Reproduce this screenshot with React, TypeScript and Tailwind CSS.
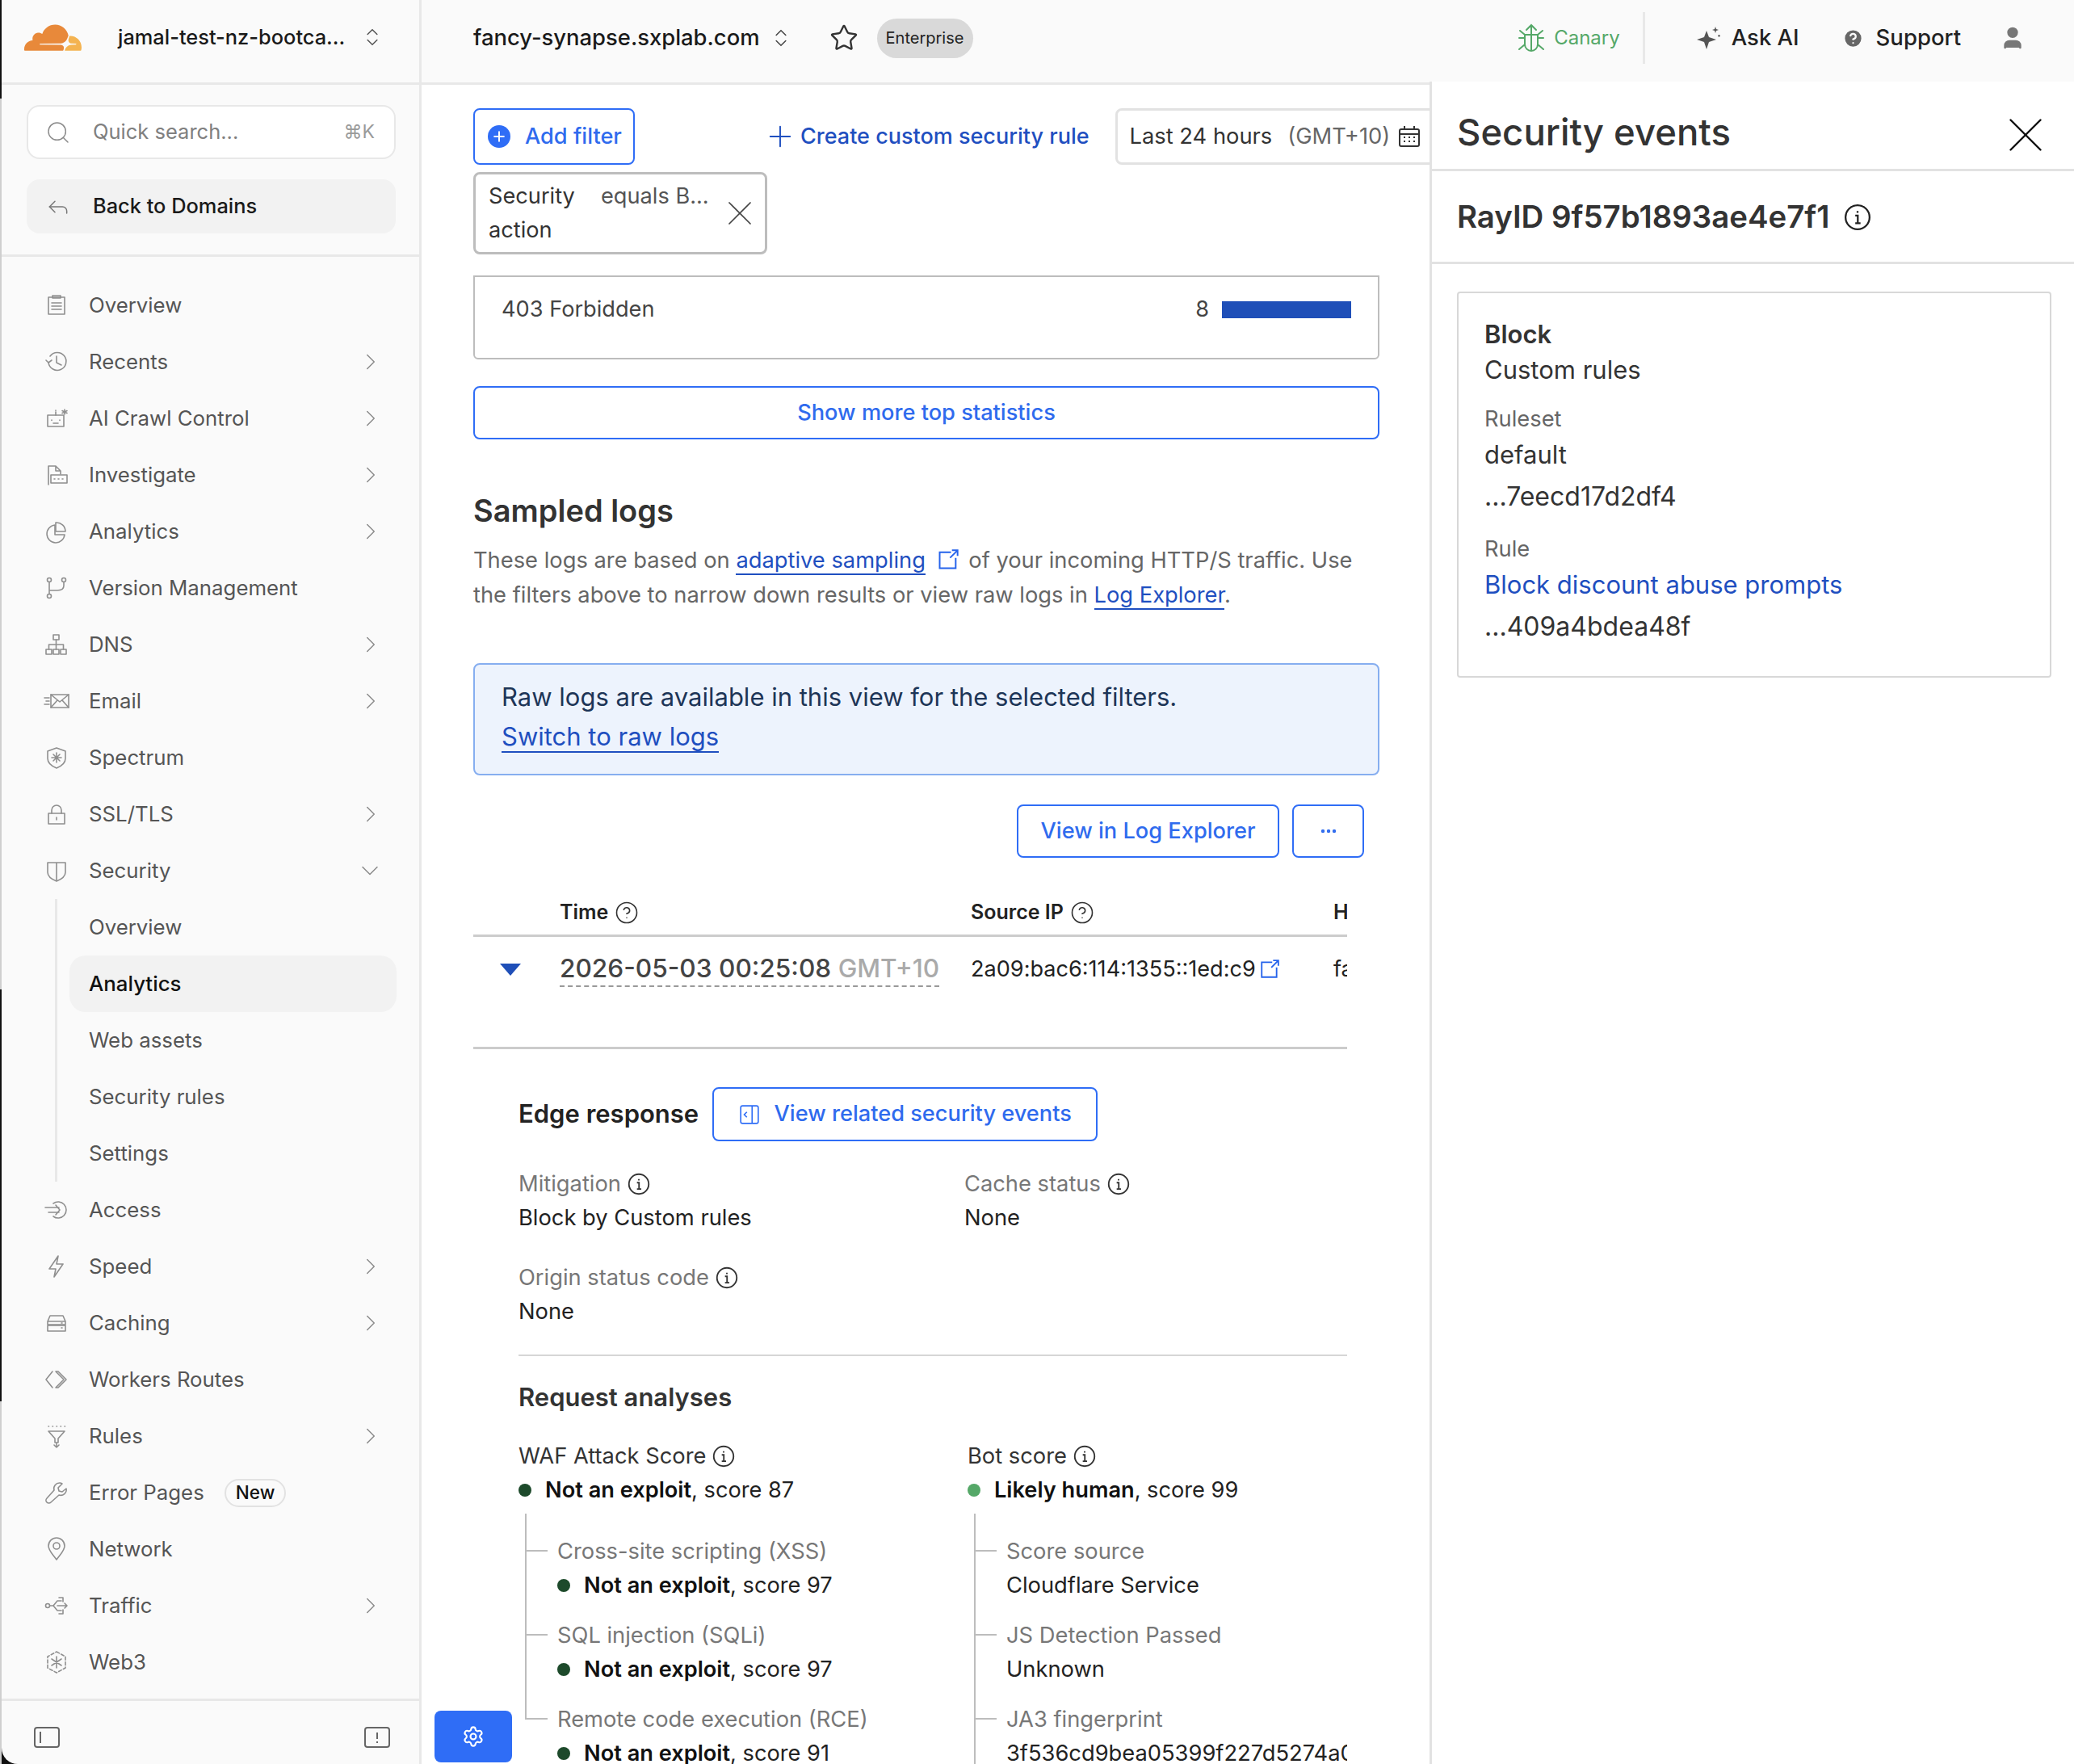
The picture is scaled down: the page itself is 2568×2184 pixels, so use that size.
import { ReactNode } from 'react';
import { ChevronRight, ChevronDown, ChevronsUpDown, CircleHelp, MoreHorizontal, Plus, Reply, Search, Settings, Star, User, X } from 'lucide-react';

// thin outline icons used in the sidebar, all drawn on a 32 box
const Ico = ({ children }: { children: ReactNode }) => (
  <svg viewBox="0 0 32 32" fill="none" stroke="#8f8f8f" strokeWidth="1.6" strokeLinecap="round" strokeLinejoin="round" className="w-8 h-8 shrink-0">
    {children}
  </svg>
);

const icons: Record<string, ReactNode> = {
  overview: <><rect x="6" y="6" width="20" height="21" /><path d="M11 4h10v3H11zM10 13h12M10 17h12M10 21h12" /></>,
  recents: <><path d="M6 17a11 11 0 1 0 2-8" /><path d="M3 14l3 3 4-3M16 9v8l6 3" /></>,
  ai: <><rect x="5" y="12" width="20" height="14" /><path d="M15 12V8M15 6v.5M10 18v.5M20 18v.5M12 22h6M26 5v6M23 6.5l6 3M29 6.5l-6 3" /></>,
  investigate: <><path d="M6 28V5h9l6 6v4M15 5v6h6" /><rect x="9" y="16" width="20" height="10" /><path d="M13 21h1M18 21h1M23 21h1" /></>,
  analytics: <><path d="M14 8a11 11 0 1 0 12 12H14z" /><path d="M15 5a11 11 0 0 1 12 11H15z" /></>,
  version: <><circle cx="7" cy="6" r="2.5" /><circle cx="25" cy="6" r="2.5" /><circle cx="7" cy="26" r="2.5" /><path d="M7 8.5v15M7 19h10q8 0 8-6v-4.5" /></>,
  dns: <><rect x="12" y="4" width="7" height="6" /><rect x="3" y="22" width="7" height="6" /><rect x="12" y="22" width="7" height="6" /><rect x="21" y="22" width="7" height="6" /><path d="M15.5 10v12M6.5 22v-6h18v6" /></>,
  email: <><rect x="9" y="8" width="22" height="16" /><path d="M9 8l11 9 11-9M9 24l8-9M31 24l-8-9M1 12h6M3 16h4M1 20h6" /></>,
  spectrum: <><path d="M16 4l11 4v9c0 6-6 10-11 12-5-2-11-6-11-12V8z" /><path d="M16 10v12M10 16h12M12 12l8 8M20 12l-8 8" /></>,
  lock: <><rect x="6" y="15" width="20" height="13" /><path d="M10 15v-4a6 6 0 0 1 12 0v4M16 20v3" /></>,
  shield: <><path d="M5 6h22v12c0 5-6 9-11 11-5-2-11-6-11-11zM16 6v23" /></>,
  access: <><path d="M12 8a10 10 0 1 1 0 16M2 13h17M6 19h13M15 10l5 6-5 6" /></>,
  speed: <path d="M18 3L7 19h8l-2 10 11-16h-8z" />,
  caching: <><path d="M5 14l3-7h16l3 7v4H5zM5 14h22M5 19h22v7H5zM22 16h1M22 22h1" /></>,
  workers: <path d="M11 6L3 16l8 10M15 6h3l10 10-10 10h-3l10-10z" />,
  rules: <><path d="M6 10h20l-8 9v5h-4v-5zM16 24v6M13 27l3 3 3-3M6 4h.5M11 4h.5M16 4h.5M21 4h.5M26 4h.5" /></>,
  error: <path d="M20 4a7 7 0 0 0-7 9L4 23a3 3 0 0 0 5 5l10-9a7 7 0 0 0 9-8l-5 4-4-1-1-4 5-5a7 7 0 0 0-3-1z" />,
  network: <><path d="M16 29c-4-6-10-11-10-17a10 10 0 0 1 20 0c0 6-6 11-10 17z" /><circle cx="16" cy="12" r="4" /></>,
  traffic: <><circle cx="5" cy="16" r="2.5" /><path d="M8 16h4l5-6h5M12 16l5 6h5M17 16h12M19 6h5v5M26 13l3 3-3 3M19 26h5v-5" /></>,
  web3: <><path d="M16 3l11 6v14l-11 6-11-6V9z" strokeDasharray="4 2.4" /><path d="M16 9v14M10 12l12 8M22 12l-12 8" /></>,
};

type Item = { label: string; icon: string; chevron?: boolean; badge?: string };

const topItems: Item[] = [
  { label: 'Overview', icon: 'overview' },
  { label: 'Recents', icon: 'recents', chevron: true },
  { label: 'AI Crawl Control', icon: 'ai', chevron: true },
  { label: 'Investigate', icon: 'investigate', chevron: true },
  { label: 'Analytics', icon: 'analytics', chevron: true },
  { label: 'Version Management', icon: 'version' },
  { label: 'DNS', icon: 'dns', chevron: true },
  { label: 'Email', icon: 'email', chevron: true },
  { label: 'Spectrum', icon: 'spectrum' },
  { label: 'SSL/TLS', icon: 'lock', chevron: true },
];

const bottomItems: Item[] = [
  { label: 'Access', icon: 'access' },
  { label: 'Speed', icon: 'speed', chevron: true },
  { label: 'Caching', icon: 'caching', chevron: true },
  { label: 'Workers Routes', icon: 'workers' },
  { label: 'Rules', icon: 'rules', chevron: true },
  { label: 'Error Pages', icon: 'error', badge: 'New' },
  { label: 'Network', icon: 'network' },
  { label: 'Traffic', icon: 'traffic', chevron: true },
  { label: 'Web3', icon: 'web3' },
];

const subItems = ['Overview', 'Analytics', 'Web assets', 'Security rules', 'Settings'];

const Icon = ({ name }: { name: string }) => <Ico>{icons[name]}</Ico>;

function NavRow({ item }: { item: Item }) {
  return (
    <div className="h-[70px] flex items-center pl-[52px] pr-[43px] text-[25.8px] text-[#555555]">
      <Icon name={item.icon} />
      <span className="ml-6">{item.label}</span>
      {item.badge && (
        <span className="ml-[25px] h-[35px] px-[12px] flex items-center rounded-full border-2 border-[#e2e2e2] text-[22.5px] font-medium text-[#111111]">{item.badge}</span>
      )}
      {item.chevron && <ChevronRight size={34} strokeWidth={1.05} color="#8a8a8a" className="ml-auto" />}
    </div>
  );
}

function Sidebar() {
  return (
    <aside className="w-[520px] h-[2184px] shrink-0 flex flex-col bg-[#fafafa] border-r-[3px] border-[#e8e8e8] rounded-bl-[20px]">
      <div className="h-[105px] shrink-0 flex items-center pl-[28px] pb-[10px] border-b-[3px] border-[#e8e8e8]">
        <svg viewBox="0 6.4 24 11.1" className="w-[71px] h-[33px]">
          <path fill="#e8893a" d="M16.5088 16.8447c.1475-.5068.0908-.9707-.1553-1.3154-.2246-.3164-.6045-.499-1.0615-.5205l-8.6592-.1123a.1559.1559 0 0 1-.1333-.0713c-.0283-.042-.0351-.0986-.021-.1553.0278-.084.1123-.1484.2036-.1562l8.7359-.1123c1.0351-.0489 2.1601-.8868 2.5537-1.9136l.499-1.3013c.0215-.0561.0293-.1128.0147-.168-.5625-2.5463-2.835-4.4453-5.5499-4.4453-2.5039 0-4.6284 1.6177-5.3876 3.8614-.4927-.3658-1.1187-.5625-1.794-.499-1.2026.119-2.1665 1.083-2.2861 2.2856-.0283.31-.0069.6128.0635.894C1.5683 13.171 0 14.7754 0 16.752c0 .1748.0142.3515.0352.5273.0141.083.0844.1475.1689.1475h15.9814c.0909 0 .1758-.0645.2032-.1553l.12-.4268z" />
          <path fill="#f4b350" d="M19.2656 11.2813c-.0771 0-.1611 0-.2383.0112-.0566 0-.1054.0415-.127.0976l-.3378 1.1744c-.1475.5068-.0918.9707.1543 1.3164.2256.3164.6055.498 1.0625.5195l1.8437.1133c.0557 0 .1055.0263.1329.0703.0283.043.0351.1074.0214.1562-.0283.084-.1132.1485-.204.1553l-1.921.1123c-1.041.0488-2.1582.8867-2.5527 1.914l-.1406.3585c-.0283.0713.0215.1416.0986.1416h6.5977c.0771 0 .1474-.0489.169-.126.1122-.4082.1757-.837.1757-1.2803 0-2.6025-2.125-4.727-4.7344-4.727" />
        </svg>
        <span className="ml-[45px] text-[25.4px] font-medium text-[#1a1a1a] whitespace-nowrap">jamal-test-nz-bootca...</span>
        <ChevronsUpDown size={28} strokeWidth={1.3} color="#555555" className="ml-[20px]" />
      </div>

      <div className="pl-[31px] pr-[29px] pt-[25px] h-[213px] shrink-0 border-b-[3px] border-[#e8e8e8]">
        <div className="h-[67px] flex items-center rounded-[16px] border-2 border-[#e8e8e8] bg-white pl-[21px] pr-[24px]">
          <Search size={32} strokeWidth={1.1} color="#8a8a8a" />
          <span className="ml-[27px] text-[25.5px] text-[#808080]">Quick search...</span>
          <span className="ml-auto text-[23px] text-[#9a9a9a]">⌘K</span>
        </div>
        <div className="mt-[25px] h-[67px] flex items-center rounded-[16px] bg-[#f2f2f2] pl-[23px]">
          <Reply size={32} strokeWidth={1.1} color="#777777" />
          <span className="ml-[27px] text-[25.4px] font-medium text-[#1a1a1a]">Back to Domains</span>
        </div>
      </div>

      <nav className="pt-[25px]">
        {topItems.map((item) => (
          <NavRow key={item.label} item={item} />
        ))}
        <div className="h-[70px] flex items-center pl-[52px] pr-[43px] text-[25.8px] text-[#555555]">
          <Icon name="shield" />
          <span className="ml-6">Security</span>
          <ChevronDown size={36} strokeWidth={1} color="#8a8a8a" className="ml-auto" />
        </div>
        <div className="ml-[66px] border-l-[3px] border-[#e8e8e8] pl-[15px] mr-[28px]">
          {subItems.map((s) => (
            <div key={s} className={s === 'Analytics' ? 'h-[70px] flex items-center pl-[24px] text-[25.8px] font-medium text-[#111111] bg-[#f2f2f2] rounded-[20px]' : 'h-[70px] flex items-center pl-[24px] text-[25.8px] text-[#555555]'}>
              {s}
            </div>
          ))}
        </div>
        {bottomItems.map((item) => (
          <NavRow key={item.label} item={item} />
        ))}
      </nav>

      <div className="mt-auto h-[81px] shrink-0 flex items-center justify-between border-t-[3px] border-[#e8e8e8] pl-[40px] pr-[36px] pt-[12px]">
        <svg viewBox="0 0 32 26" className="w-[32px] h-[26px]" fill="none" stroke="#666666" strokeWidth="2"><rect x="1" y="1" width="30" height="24" rx="3" /><path d="M8 6v14" /></svg>
        <svg viewBox="0 0 32 26" className="w-[32px] h-[26px]" fill="none" stroke="#666666" strokeWidth="2"><rect x="1" y="1" width="30" height="24" rx="3" /><path d="M16 7v8M16 18v2" /></svg>
      </div>
    </aside>
  );
}

function TopBar() {
  return (
    <header className="h-[105px] shrink-0 flex items-start bg-[#fafafa] border-b-[3px] border-[#e8e8e8]">
      <div className="h-[94px] flex items-center pl-[64px]">
        <span className="text-[27.4px] font-medium text-[#1a1a1a] whitespace-nowrap">fancy-synapse.sxplab.com</span>
        <ChevronsUpDown size={28} strokeWidth={1.3} color="#444444" className="ml-[12px]" />
        <Star size={36} strokeWidth={1.6} color="#333333" className="ml-[46px]" />
        <span className="ml-[23px] h-[49px] w-[119px] flex items-center justify-center rounded-full bg-[#d9d9d9] text-[20px] text-[#222222]">Enterprise</span>
      </div>
      <div className="ml-auto h-[94px] flex items-center pr-[60px]">
        <svg viewBox="0 0 36 36" className="w-[36px] h-[36px]" fill="none" stroke="#55a868" strokeWidth="2" strokeLinecap="round">
          <path d="M18 2v32M12 8l6-6 6 6M10 14h16v12a8 8 0 0 1-16 0zM10 18H3M26 18h7M10 26l-7 6M26 26l7 6M10 14L4 9M26 14l6-5" />
        </svg>
        <span className="ml-[10px] text-[24px] text-[#55a868]">Canary</span>
        <div className="ml-[28px] w-[3px] h-[64px] bg-[#e8e8e8]" />
        <svg viewBox="0 0 30 30" className="ml-[63px] w-[30px] h-[30px]" fill="#555555">
          <path d="M13 6l3 8 9 3-9 3-3 9-3-9-9-3 9-3zM24 1l1 3 3 1-3 1-1 3-1-3-3-1 3-1zM28.5 11a1.3 1.3 0 1 0 .01 0z" />
        </svg>
        <span className="ml-[14px] text-[27.5px] font-medium text-[#222222]">Ask AI</span>
        <CircleHelp size={27} color="#fafafa" fill="#666666" strokeWidth={2} className="ml-[53px]" />
        <span className="ml-[15px] text-[27.5px] font-medium text-[#222222]">Support</span>
        <User size={32} color="#777777" fill="#777777" className="ml-[48px]" />
      </div>
    </header>
  );
}

const OutlineButton = ({ children, className }: { children: ReactNode; className: string }) => (
  <div className={`flex items-center justify-center rounded-[8px] border-2 border-[#2f6df6] text-[#2f6bee] text-[27.2px] font-medium ${className}`}>{children}</div>
);

const ExtLink = ({ size = 28 }: { size?: number }) => (
  <svg viewBox="0 0 24 24" width={size} height={size} fill="none" stroke="#2563eb" strokeWidth="1.7">
    <path d="M15 4H3v17h17V10M14 10l8-8M16 2h6v6" />
  </svg>
);

const Help = () => <CircleHelp size={30} strokeWidth={1.3} color="#333333" className="ml-[8px]" />;

// circled i with a small serif foot
const InfoI = ({ size = 28, color = '#333333', className = 'ml-[8px]' }: { size?: number; color?: string; className?: string }) => (
  <svg viewBox="0 0 24 24" width={size} height={size} fill="none" stroke={color} strokeWidth="1.6" className={className}>
    <circle cx="12" cy="12" r="10.5" />
    <path d="M10 10.5h2.2V17M10 17.2h4.6M12 6.6v1.6" />
  </svg>
);

const Score = ({ bold, score, dot = '#1d4a2b' }: { bold: string; score: string; dot?: string }) => (
  <div className="h-[42px] flex items-center text-[27.2px] text-[#222222]">
    <span className="w-4 h-4 rounded-full shrink-0" style={{ background: dot }} />
    <span className="ml-[17px] font-semibold text-[#111111]">{bold}</span>
    <span>, score {score}</span>
  </div>
);

function TreeItem({ label, last, children }: { label: string; last?: boolean; children: ReactNode }) {
  return (
    <div className="relative pl-[40px] pt-[26px] mb-[-6px]">
      <span className={last ? 'absolute left-0 top-0 h-[46px] w-[2px] bg-[#bdbdbd]' : 'absolute left-0 top-0 bottom-0 w-[2px] bg-[#bdbdbd]'} />
      <span className="absolute left-0 top-[45px] h-[2px] w-[28px] bg-[#bdbdbd]" />
      <div className="h-[42px] flex items-center text-[27.3px] text-[#777777]">{label}</div>
      {children}
    </div>
  );
}

function Main() {
  return (
    <main className="w-[1248px] shrink-0 overflow-hidden pl-[64px] bg-white">
      {/* filter bar */}
      <div className="mt-[29px] flex items-center h-[70px] w-[1300px]">
        <OutlineButton className="w-[200px] h-[70px] !justify-start pl-[16px] gap-[18px]">
          <span className="w-[28px] h-[28px] rounded-full bg-[#2f6df6] flex items-center justify-center">
            <Plus size={20} strokeWidth={2.4} color="#ffffff" />
          </span>
          Add filter
        </OutlineButton>
        <Plus size={42} strokeWidth={1.1} color="#2050c0" className="ml-[159px]" />
        <span className="ml-[4px] text-[27px] font-medium text-[#1f4fc0] whitespace-nowrap">Create custom security rule</span>
        <div className="ml-[32px] w-[420px] h-[70px] shrink-0 flex items-center rounded-[8px] border-[3px] border-[#e2e2e2] pl-[15px] text-[27.3px]">
          <span className="text-[#333333]">Last 24 hours</span>
          <span className="ml-[19px] text-[#666666]">(GMT+10)</span>
          <svg viewBox="0 0 26 26" className="ml-[11px] w-[26px] h-[26px]" fill="none" stroke="#333333" strokeWidth="2">
            <rect x="1" y="4" width="24" height="21" rx="2" />
            <path d="M1 10h24M7 0v5M19 0v5M6 14h2M12 14h2M18 14h2M6 19h2M12 19h2M18 19h2" />
          </svg>
        </div>
      </div>

      <div className="mt-[9px] w-[364px] h-[102px] flex items-center rounded-[8px] border-[3px] border-[#bdbdbd] pl-[16px] text-[27.2px] leading-[42px] text-[#333333]">
        <div className="w-[285px] shrink-0">
          <div className="flex">
            <span className="w-[139px]">Security</span>
            <span className="text-[#555555]">equals B...</span>
          </div>
          <div>action</div>
        </div>
        <X size={52} strokeWidth={0.8} color="#444444" />
      </div>

      <div className="mt-[26px] w-[1122px] h-[104px] flex items-start pt-[20px] pl-[33px] pr-[33px] rounded-b-[6px] border-2 border-[#bdbdbd] text-[27.2px] text-[#444444]">
        <span className="leading-[40px]">403 Forbidden</span>
        <span className="ml-auto leading-[40px]">8</span>
        <span className="ml-[16px] mt-[10px] w-[160px] h-[21px] bg-[#1f4fb8]" />
      </div>

      <OutlineButton className="mt-[33px] w-[1122px] h-[66px]">Show more top statistics</OutlineButton>

      <h2 className="mt-[64px] h-[48px] flex items-center text-[38px] font-semibold text-[#333333]">Sampled logs</h2>
      <p className="mt-[16px] w-[1122px] text-[27.3px] leading-[43px] text-[#666666]">
        These logs are based on <span className="text-[#1f4fc0] border-b-2 border-[#1f4fc0]">adaptive sampling</span>{' '}
        <span className="inline-block align-[-4px] ml-[6px] mr-[4px]"><ExtLink /></span> of your incoming HTTP/S traffic. Use
        <br />
        the filters above to narrow down results or view raw logs in <span className="text-[#1f4fc0] border-b-2 border-[#1f4fc0]">Log Explorer</span>.
      </p>

      <div className="mt-[63px] w-[1122px] h-[139px] flex flex-col justify-center rounded-[8px] border-2 border-[#86aef0] bg-[#edf3fd] pl-[33px] pb-[7px] text-[31px] leading-[49px] text-[#1d3557]">
        <div>Raw logs are available in this view for the selected filters.</div>
        <div><span className="text-[#1f4fc0] border-b-2 border-[#1f4fc0]">Switch to raw logs</span></div>
      </div>

      <div className="mt-[36px] w-[1103px] flex justify-end gap-[16px]">
        <OutlineButton className="w-[325px] h-[66px]">View in Log Explorer</OutlineButton>
        <OutlineButton className="w-[89px] h-[66px]"><MoreHorizontal size={24} strokeWidth={2.4} /></OutlineButton>
      </div>

      {/* sampled log table */}
      <div className="w-[1082px] overflow-hidden">
        <div className="mt-[41px] h-[57px] flex items-center border-b-[3px] border-[#cccccc] text-[25px] font-semibold text-[#222222] whitespace-nowrap">
          <div className="w-[107px] shrink-0" />
          <div className="w-[509px] shrink-0 flex items-center">Time<Help /></div>
          <div className="w-[449px] shrink-0 flex items-center">Source IP<Help /></div>
          <div>Host</div>
        </div>
        <div className="h-[139px] border-b-[3px] border-[#cccccc]">
          <div className="h-[80px] flex items-center text-[27.1px] text-[#222222] whitespace-nowrap">
            <div className="w-[107px] shrink-0 pl-[33px]">
              <span className="block w-0 h-0 border-l-[13px] border-r-[13px] border-t-[15px] border-l-transparent border-r-transparent border-t-[#1f4fb8]" />
            </div>
            <div className="w-[509px] shrink-0">
              <span className="text-[31.6px] font-medium leading-[42px] text-[#444444] border-b-2 border-dashed border-[#999999] inline-block">
                2026-05-03 00:25:08 <span className="text-[#aaaaaa]">GMT+10</span>
              </span>
            </div>
            <div className="w-[449px] shrink-0 flex items-center">2a09:bac6:114:1355::1ed:c9<span className="ml-[4px]"><ExtLink size={26} /></span></div>
            <div>fancy</div>
          </div>
        </div>

        <div className="pl-[56px]">
          <div className="mt-[47px] h-[67px] flex items-center">
            <span className="text-[31px] font-semibold text-[#222222]">Edge response</span>
            <OutlineButton className="ml-[17px] w-[477px] h-[67px]">
              <svg viewBox="0 0 24 24" className="w-[26px] h-[26px] mr-[18px]" fill="none" stroke="#2f6df6" strokeWidth="1.5"><rect x="2" y="2" width="20" height="20" rx="2" /><path d="M15 2v20M9 9l-3 3 3 3" /></svg>
              View related security events
            </OutlineButton>
          </div>

          <div className="mt-[32px] grid grid-cols-[552px_1fr] text-[27.3px] leading-[42px] text-[#222222]">
            <div>
              <div className="flex items-center text-[#777777]">Mitigation<InfoI /></div>
              <div>Block by Custom rules</div>
            </div>
            <div>
              <div className="flex items-center text-[#777777]">Cache status<InfoI /></div>
              <div>None</div>
            </div>
          </div>
          <div className="mt-[32px] text-[27.3px] leading-[42px] text-[#222222]">
            <div className="flex items-center text-[#777777]">Origin status code<InfoI /></div>
            <div>None</div>
          </div>

          <div className="mt-[32px] h-[2px] bg-[#d6d6d6]" />

          <h3 className="mt-[30px] h-[42px] flex items-center text-[31px] font-semibold text-[#333333]">Request analyses</h3>

          <div className="mt-[31px] grid grid-cols-[556px_1fr] whitespace-nowrap">
            <div>
              <div className="h-[42px] flex items-center text-[27.3px] text-[#333333]">WAF Attack Score<InfoI /></div>
              <Score bold="Not an exploit" score="87" />
              <div className="mt-[8px] ml-[8px]">
                <TreeItem label="Cross-site scripting (XSS)"><Score bold="Not an exploit" score="97" /></TreeItem>
                <TreeItem label="SQL injection (SQLi)"><Score bold="Not an exploit" score="97" /></TreeItem>
                <TreeItem label="Remote code execution (RCE)" last><Score bold="Not an exploit" score="91" /></TreeItem>
              </div>
            </div>
            <div>
              <div className="h-[42px] flex items-center text-[27.3px] text-[#333333]">Bot score<InfoI /></div>
              <Score bold="Likely human" score="99" dot="#55a868" />
              <div className="mt-[8px] ml-[8px]">
                <TreeItem label="Score source"><div className="h-[42px] flex items-center text-[27.3px] text-[#222222]">Cloudflare Service</div></TreeItem>
                <TreeItem label="JS Detection Passed"><div className="h-[42px] flex items-center text-[27.3px] text-[#222222]">Unknown</div></TreeItem>
                <TreeItem label="JA3 fingerprint"><div className="h-[42px] flex items-center text-[27.3px] text-[#222222]">3f536cd9bea05399f227d5274a0e1b6c</div></TreeItem>
              </div>
            </div>
          </div>
        </div>
      </div>
    </main>
  );
}

function Panel() {
  return (
    <section className="flex-1 -mt-[4px] relative z-10 bg-white border-l-[3px] border-[#e2e2e2]">
      <div className="h-[111px] flex items-center justify-between pt-[18px] pl-[31px] pr-[23px] border-b-[3px] border-[#e2e2e2]">
        <h2 className="text-[45.5px] font-medium text-[#333333]">Security events</h2>
        <X size={74} strokeWidth={0.8} color="#111111" className="mt-[6px]" />
      </div>
      <div className="h-[115px] flex items-center pl-[31px] pt-[2px] border-b-[3px] border-[#e2e2e2]">
        <span className="text-[38.4px] font-semibold text-[#333333]">RayID 9f57b1893ae4e7f1</span>
        <InfoI size={34} color="#222222" className="ml-[18px]" />
      </div>
      <div className="mt-[34px] ml-[31px] mr-[28px] h-[478px] rounded-[4px] border-2 border-[#d8d8d8] pl-[32px] pt-[29px] text-[31px] leading-[44px] text-[#333333]">
        <div className="font-semibold">Block</div>
        <div>Custom rules</div>
        <div className="mt-[17px] text-[27.3px] text-[#666666]">Ruleset</div>
        <div>default</div>
        <div className="mt-[8px] text-[32px]">...7eecd17d2df4</div>
        <div className="mt-[21px] text-[27.3px] text-[#666666]">Rule</div>
        <div className="text-[#1f4fc0]">Block discount abuse prompts</div>
        <div className="mt-[8px] text-[32px]">...409a4bdea48f</div>
      </div>
    </section>
  );
}

export default function App() {
  return (
    <div className="relative w-[2568px] h-[2184px] flex overflow-hidden bg-[#111111] font-['Inter',sans-serif]">
      <div className="w-[2px] shrink-0 flex flex-col">
        <div className="h-[122px] bg-[#111111]" />
        <div className="h-[1103px] bg-[#cfcfcf]" />
        <div className="h-[510px] bg-[#111111]" />
        <div className="flex-1 bg-[#cfcfcf]" />
      </div>
      <Sidebar />
      <div className="flex-1 flex flex-col min-w-0 bg-white">
        <TopBar />
        <div className="flex-1 flex min-h-0">
          <Main />
          <Panel />
        </div>
      </div>
      {/* floating settings button */}
      <div className="absolute left-[538px] top-[2118px] w-[96px] h-[64px] rounded-[8px] bg-[#2f6df6] flex items-center justify-center">
        <Settings size={28} strokeWidth={1.8} color="#ffffff" />
      </div>
    </div>
  );
}
